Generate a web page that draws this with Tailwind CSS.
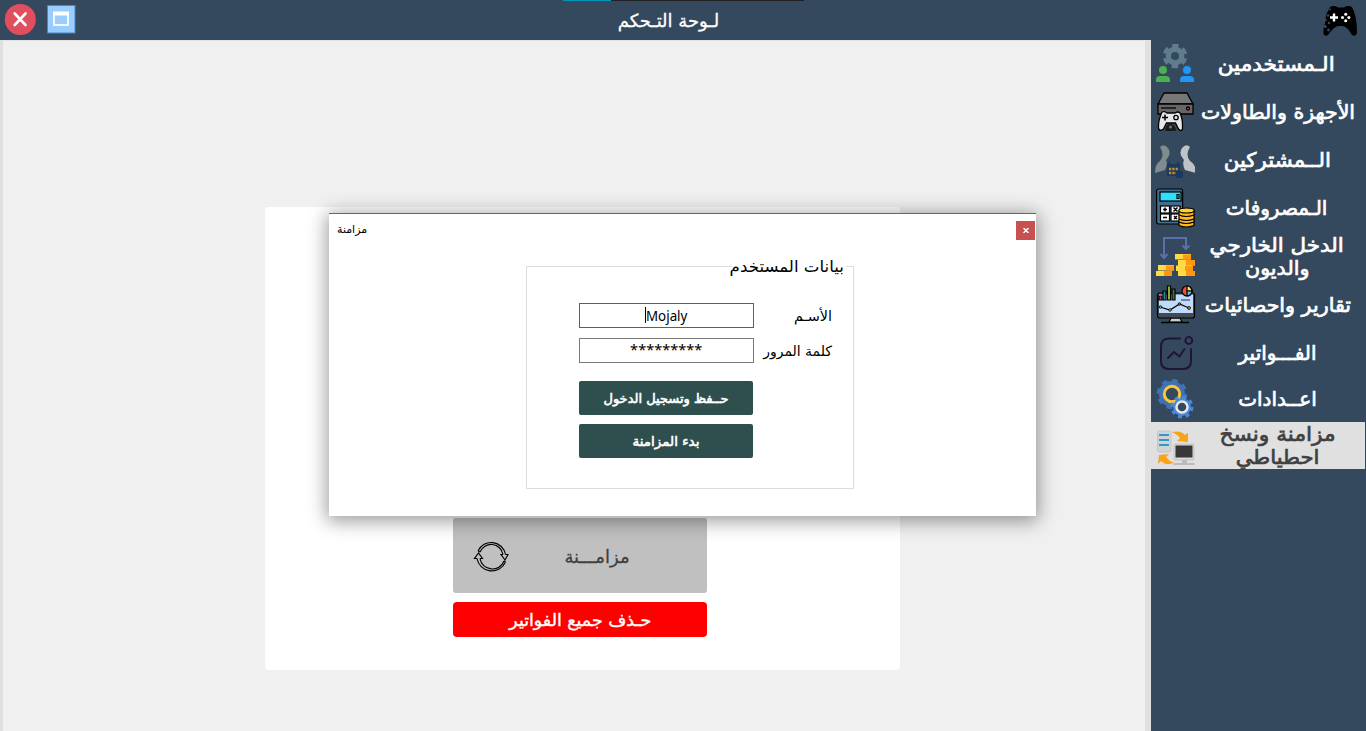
<!DOCTYPE html>
<html lang="ar">
<head>
<meta charset="utf-8">
<title>لوحة التحكم</title>
<script src="https://cdn.jsdelivr.net/npm/@tailwindcss/browser@4"></script>
</head>
<body class="w-[1366px] h-[731px] overflow-hidden bg-[#f0f0f0] font-['DejaVu_Sans',sans-serif]">
<div class="relative flex h-[731px] w-[1366px] flex-col">
  <header class="relative flex h-10 shrink-0 items-center bg-[#34495e] pl-1 pr-2">
    <svg class="h-8 w-8" viewBox="0 0 32 32"><circle cx="16.3" cy="15.5" r="15.5" fill="#e14f5f"/><path d="M10.700 9.500 21.500 21M21.500 9.500 10.700 21" stroke="#fff" stroke-width="2.600" stroke-linecap="round"/></svg>
    <svg class="ml-[10px] h-[30px] w-[30px]" viewBox="0 0 30 30"><rect x="1.500" y="0.500" width="27.500" height="27.500" fill="#99ccff" stroke="#4788c7"/><rect x="8" y="8.500" width="14" height="11.500" fill="none" stroke="#fff" stroke-width="1.700"/><rect x="7" y="6.500" width="16" height="4" fill="#fff"/></svg>
    <h1 class="flex flex-1 justify-center pr-[61px] text-[18px] text-white [-webkit-text-stroke:0.3px]"><span class="whitespace-nowrap" dir="rtl">لـوحة التـحكم</span></h1>
    <svg class="mt-[3px] h-9 w-9" viewBox="0 0 36 36"><path d="M8 3Q12 1 16 3.500H22Q26 1 30 3Q35 12 35 29Q34 33 30 31Q25 22 20 22H17Q12 22 6 31Q3 33 1.500 30Q1 25 3 19L4 11Z" fill="#000"/><g fill="#34495e"><circle cx="3" cy="8" r="1.200"/><circle cx="6" cy="11.500" r="1.300"/><circle cx="3.500" cy="16" r="1.300"/><circle cx="7" cy="19" r="1.200"/><circle cx="3.300" cy="22.500" r="1.500"/><circle cx="6.500" cy="26" r="1.400"/><circle cx="8" cy="5.500" r="1"/></g><path d="M12 9.500V17.500M8 13.500H16" stroke="#fff" stroke-width="2.400"/><g fill="#fff"><circle cx="23.700" cy="10.200" r="1.500"/><circle cx="23.700" cy="16.800" r="1.500"/><circle cx="20.500" cy="13.500" r="1.500"/><circle cx="26.900" cy="13.500" r="1.500"/></g></svg>
    <div class="absolute left-[563px] top-0 flex h-px w-[241px] bg-[#202020]"><i class="h-px w-12 bg-[#0099bc]"></i></div>
  </header>
  <div class="flex flex-1">
    <main class="flex flex-1 justify-center border-x-[3px] border-[#e0e0e0] border-r-[6px] border-t border-t-[#e3e3e3] bg-[#f0f0f0] pl-[17px] pt-[166px]">
      <section class="flex h-[463px] w-[635px] flex-col items-center rounded bg-white pr-[5px] pt-[311px]">
        <button class="flex h-[75px] w-[254px] items-center rounded-[3px] bg-[#c0c0c0] pl-[20px] text-[#404040]">
          <svg class="h-9 w-9 shrink-0" viewBox="0 0 36 36" fill="none" stroke="#000" stroke-width="1.150"><path d="M5 13A14.500 14.500 0 0 1 32.500 16.500M7 14A12 12 0 0 1 30 16.500M5 13l2 1M30 16.500h-2l4 5.500 3-5.500h-2.500M32.500 24A15 15 0 0 1 4 20.500M31 23A12.500 12.500 0 0 1 7 20.500M32.500 24 31 23M4 20.500H1.500L5.500 15 9.500 20.500H7"/></svg>
          <span class="flex flex-1 justify-center pr-[22px] pt-[2px]"><span class="whitespace-nowrap text-[18px] [-webkit-text-stroke:0.3px]" dir="rtl">مزامـــنة</span></span>
        </button>
        <button class="mt-[9px] flex h-[35px] w-[254px] items-center justify-center rounded-[4px] bg-[#ff0000] pt-[3px] text-white"><span class="scale-x-[1.025] whitespace-nowrap text-[17px] [-webkit-text-stroke:0.4px]" dir="rtl">حـذف جميع الفواتير</span></button>
      </section>
    </main>
    <nav class="flex w-[215px] flex-col bg-[#34495e] text-[20px] leading-[23px] text-white [-webkit-text-stroke:0.7px]">
      <div class="flex h-12 items-center pl-[5px]">
        <svg class="h-10 w-10 shrink-0" viewBox="0 0 40 40"><circle cx="19" cy="12" r="6.700" fill="none" stroke="#607d8b" stroke-width="5.400"/><circle cx="19" cy="12" r="10" fill="none" stroke="#607d8b" stroke-width="4.500" stroke-dasharray="6 4.472" stroke-dashoffset="-2.230"/><g fill="#4caf50"><circle cx="7" cy="26" r="4"/><path d="M0 38v-2q0-4 4-4h6q4 0 4 4v2z"/></g><g fill="#2196f3"><circle cx="31" cy="26" r="4"/><path d="M24 38v-2q0-4 4-4h6q4 0 4 4v2z"/></g></svg>
        <div class="flex flex-1 justify-center pr-[9px]"><span class="scale-x-[1.08] whitespace-nowrap" dir="rtl">الـمستخدمين</span></div>
      </div>
      <div class="flex h-12 items-center pl-[5px]">
        <svg class="h-10 w-10 shrink-0" viewBox="0 0 40 40" stroke="#000" stroke-width="1.300"><path d="M8 1H31L37 12H2Z" fill="#777"/><path d="M2 12H37V22H2Z" fill="#666"/><path d="M5 16H20" /><circle cx="32" cy="16.500" r="1.500" fill="#f04a6a"/><path d="M6 20q3-1 5 1h8q3-2 5 0 3 6 2.500 16-1 3-4 0l-3-6h-9l-3 6q-4 3-5-1Q2 29 6 20Z" fill="#e8e8e8"/><path d="M6 25.500h6M9 22.500v6" stroke-width="1.500"/><circle cx="20" cy="25.500" r="2.200" fill="none"/><path d="M9 39q1-7 5-7 6 1 6 7z" fill="#1a1a1a" stroke="none"/><circle cx="14.500" cy="35" r="1.500" fill="#777" stroke="none"/></svg>
        <div class="flex flex-1 justify-center pr-[6px]"><span class="scale-x-[1.026] whitespace-nowrap" dir="rtl">الأجهزة والطاولات</span></div>
      </div>
      <div class="flex h-12 items-center pl-[4px]">
        <svg class="h-10 w-10 shrink-0" viewBox="0 0 40 40"><path d="M5 7Q9 3 13 8Q17 14 11 20Q13 24 10 30L0 33Q0 24 5 21Q10 15 5 7Z" fill="#7f8c8d"/><path d="M35 7Q31 3 27 8Q23 14 29 20Q27 24 30 30L41 33Q41 24 35 21Q30 15 35 7Z" fill="#bdc3c7"/><rect x="12" y="24" width="13" height="12" rx="1" fill="#173a5e"/><path d="M14 22v4M23 22v4" stroke="#173a5e" stroke-width="2"/><path d="M14 29h9M14 33h7" stroke="#d08a2a" stroke-width="2.500" stroke-dasharray="2.300 1"/><rect x="21" y="31" width="7" height="7" rx="1" fill="#173a5e"/></svg>
        <div class="flex flex-1 justify-center pr-[7px]"><span class="scale-x-[1.065] whitespace-nowrap" dir="rtl">الــمشتركين</span></div>
      </div>
      <div class="flex h-12 items-center pl-[5px]">
        <svg class="h-10 w-10 shrink-0" viewBox="0 0 40 40" stroke="#000" stroke-width="1.200"><rect x=".600" y="1" width="26" height="35" rx="2" fill="#426d8c"/><rect x="4" y="4" width="21" height="9" fill="#2de0ff"/><path d="M21 6.500h2v4h-2z" fill="none"/><rect x="4.500" y="18" width="9" height="7" fill="#fff"/><rect x="15" y="18" width="9" height="7" fill="#fff"/><rect x="4.500" y="26" width="9" height="7" fill="#fff"/><rect x="15" y="26" width="9" height="7" fill="#fff"/><path d="M7 21.500h4M9 19.500v4M7 29.500h4M17.500 19.500l4 4M21.500 19.500l-4 4M18 28l3 3M21 28l-3 3" stroke-width="1.500"/><g fill="#ffb820"><path d="M23 34.500v3q7 3 15 0v-3z"/><path d="M23 31v3q7 3 15 0v-3z"/><path d="M23 27v4q7 3 15 0v-4z"/><path d="M23 23v4q7 3 15 0v-4z"/><ellipse cx="30.500" cy="22.500" rx="7.700" ry="2.500" fill="#ffd033"/></g></svg>
        <div class="flex flex-1 justify-center pr-[9px]"><span class="whitespace-nowrap" dir="rtl">الـمصروفات</span></div>
      </div>
      <div class="flex h-12 items-center pl-[5px]">
        <svg class="h-10 w-10 shrink-0" viewBox="0 0 40 40"><path d="M8 21V2H30V12M4.500 18 8 22l3.500-4M26.500 9.500 30 13l3.500-3.500" fill="none" stroke="#5c6fa8" stroke-width="2"/><g fill="#ffda44"><path d="M19 18h16v5.500H19zM22 24h17v5.500H22zM20 29.500h16V35H20zM22 35h17v5H22zM2 29h16v5.500H2zM0 35h16v5H0z"/></g><g fill="#ff9811"><path d="M27 18.500h8V23.500h-8zM30 24h9v5.500h-9zM29 30h8v5h-8zM30 35h9v5h-9zM10 29.500h8v5h-8zM8 35h8v5H8z"/></g></svg>
        <div class="flex flex-1 flex-col items-center pr-[8px] pt-px"><span class="scale-x-[1.07] whitespace-nowrap" dir="rtl">الدخل الخارجي</span><span class="scale-x-[1.03] whitespace-nowrap" dir="rtl">والديون</span></div>
      </div>
      <div class="flex h-12 items-center pl-[5px]">
        <svg class="h-10 w-10 shrink-0" viewBox="0 0 40 40" stroke="#000" stroke-width="1.200"><path d="M15 34h9l2 4H13z" fill="#ccc"/><path d="M5 38.500h28" stroke-width="1.500"/><rect x="1.500" y="9" width="37" height="25" rx="2" fill="#404b56"/><rect x="3" y="10.500" width="34" height="18.500" fill="#bfdcff" stroke="none"/><path d="M3 16V12h3v4z" fill="#c33"/><path d="M7 16V7h3v9z" fill="#2a8a9a"/><path d="M11.500 16V2h3v14z" fill="#9ac43c"/><path d="M16 16V5h3v11z" fill="#4a6a4a"/><path d="M4 23l10 3L23.500 20l9.500 4" fill="none"/><g stroke-width=".800"><circle cx="4.500" cy="23" r="1.300" fill="#4c8"/><circle cx="14" cy="26" r="1.300" fill="#fc4"/><circle cx="23.500" cy="20" r="1.300" fill="#e44"/><circle cx="33" cy="24" r="1.500" fill="#e80"/></g><circle cx="31" cy="7" r="5" fill="#ef5038"/><path d="M31 7V2a5 5 0 0 1 5 5z" fill="#ffe45c"/><path d="M31 7h5a5 5 0 0 1-5 5z" fill="#56bde8"/><path d="M25 16h9" stroke-width=".800"/></svg>
        <div class="flex flex-1 justify-center pr-[7px] pt-[2px]"><span class="scale-x-[1.03] whitespace-nowrap" dir="rtl">تقارير واحصائيات</span></div>
      </div>
      <div class="flex h-12 items-center pl-[5px]">
        <svg class="mt-px h-10 w-10 shrink-0" viewBox="0 0 40 40" fill="none" stroke="#221338" stroke-width="2" stroke-linecap="round" stroke-linejoin="round"><path d="M24 5.500H13Q5 5.500 5 13.500V28Q5 36 13 36H27Q35 36 35 28V16"/><circle cx="32.800" cy="7.500" r="3.400"/><path d="M12 25l6-6 5.500 4.500L28.500 16"/></svg>
        <div class="flex flex-1 justify-center pr-[7px] pt-[2px]"><span class="whitespace-nowrap" dir="rtl">الفـــواتير</span></div>
      </div>
      <div class="flex h-[46px] items-center pl-[5px]">
        <svg class="h-10 w-10 shrink-0" viewBox="0 0 40 40"><circle cx="16" cy="15" r="10" fill="none" stroke="#3f72b5" stroke-width="6"/><circle cx="16" cy="15" r="13" fill="none" stroke="#3f72b5" stroke-width="4.500" stroke-dasharray="5.100 5.110"/><circle cx="16" cy="15" r="7.700" fill="#34495e" stroke="#ffc736" stroke-width="3"/><circle cx="26" cy="28" r="9" fill="#4989d8"/><circle cx="26" cy="28" r="9.500" fill="none" stroke="#4989d8" stroke-width="4" stroke-dasharray="3.730 3.730"/><circle cx="26" cy="28" r="5.500" fill="#34495e" stroke="#e8e8e8" stroke-width="2.500"/></svg>
        <div class="flex flex-1 justify-center pr-[7px]"><span class="whitespace-nowrap" dir="rtl">اعــدادات</span></div>
      </div>
      <div class="mr-px flex h-[47px] items-center bg-[#e0e0e0] pl-[5px] text-[#404040]">
        <svg class="h-10 w-10 shrink-0" viewBox="0 0 40 40"><rect x="1.500" y="5" width="13.500" height="21" rx="1.500" fill="#d0d3d5" stroke="#bbb" stroke-width=".600"/><path d="M3 9h10M3 14h10M3 19h10" stroke="#3298c8" stroke-width="2"/><path d="M16 6Q25 4 29 9l3-2V16l-11-1 3-3Q22 9 16 6Z" fill="#f9a31a"/><path d="M3 29l10-1-3 3q3 4 8 6-9 3-13-2l-3 3Z" fill="#f9a31a"/><rect x="18" y="18" width="20" height="16" rx="1" fill="#d8d8d8" stroke="#aaa" stroke-width=".500"/><rect x="19.500" y="19.500" width="17" height="12" fill="#383638"/><path d="M26 34h5v3h7l1 2H17l1-2h8z" fill="#bbb"/></svg>
        <div class="flex flex-1 flex-col items-center pr-[6px] pt-px"><span class="scale-x-[1.085] whitespace-nowrap" dir="rtl">مزامنة ونسخ</span><span class="scale-x-[1.06] whitespace-nowrap" dir="rtl">احطياطي</span></div>
      </div>
    </nav>
  </div>

  <div class="absolute left-[329px] top-[213px] flex h-[303px] w-[707px] flex-col border-t border-[#666] bg-white shadow-[0_3px_18px_2px_rgba(0,0,0,0.4)]">
    <div class="flex h-[52px] items-start justify-between pl-2 pr-px pt-[7px]">
      <span class="whitespace-nowrap pt-px text-[11px]" dir="rtl">مزامنة</span>
      <button class="flex h-[19px] w-[19px] items-center justify-center bg-[#c75050]"><svg class="h-[5px] w-[6px]" viewBox="0 0 6 5"><path d="M.500 0 5.500 5M5.500 0 .500 5" stroke="#fff" stroke-width="1.500"/></svg></button>
    </div>
    <fieldset dir="rtl" class="relative ml-[197px] flex h-[223px] w-[328px] flex-col border border-[#dcdcdc]">
      <span class="absolute right-[7px] top-[-10px] flex h-5 items-center bg-white px-[2px] text-[16px]"><span class="origin-right scale-x-[1.04] whitespace-nowrap">بيانات المستخدم</span></span>
      <div class="mt-9 flex h-[25px] items-center pr-[21px]">
        <div class="w-[78px]"><span class="inline-block origin-right scale-x-[1.03] whitespace-nowrap text-[14px]">الأسـم</span></div>
        <div dir="ltr" class="flex h-[25px] w-[175px] items-center justify-center border border-[#0078d7] font-['Noto_Sans'] text-[15px]"><i class="mb-[2px] h-4 w-px bg-black"></i><span class="-mr-[5px] origin-left scale-x-[0.89]">Mojaly</span></div>
      </div>
      <div class="mt-[10px] flex h-[25px] items-center pr-[21px]">
        <div class="w-[78px]"><span class="inline-block whitespace-nowrap text-[14px]">كلمة المرور</span></div>
        <div dir="ltr" class="flex h-[25px] w-[175px] items-center justify-center border border-[#7a7a7a] pb-[3px] font-['Noto_Sans'] text-[15px]"><span class="scale-x-[0.97]">*********</span></div>
      </div>
      <button class="mr-[100px] mt-[18px] flex h-[34px] w-[174px] items-center justify-center rounded-[2px] bg-[#2f4f4f] pt-px text-[13px] text-white [-webkit-text-stroke:0.6px]"><span class="whitespace-nowrap">حــفظ وتسجيل الدخول</span></button>
      <button class="mr-[100px] mt-[9px] flex h-[34px] w-[174px] items-center justify-center rounded-[2px] bg-[#2f4f4f] pt-px text-[13.500px] text-white [-webkit-text-stroke:0.6px]"><span class="whitespace-nowrap">بدء المزامنة</span></button>
    </fieldset>
  </div>
</div>
</body>
</html>
